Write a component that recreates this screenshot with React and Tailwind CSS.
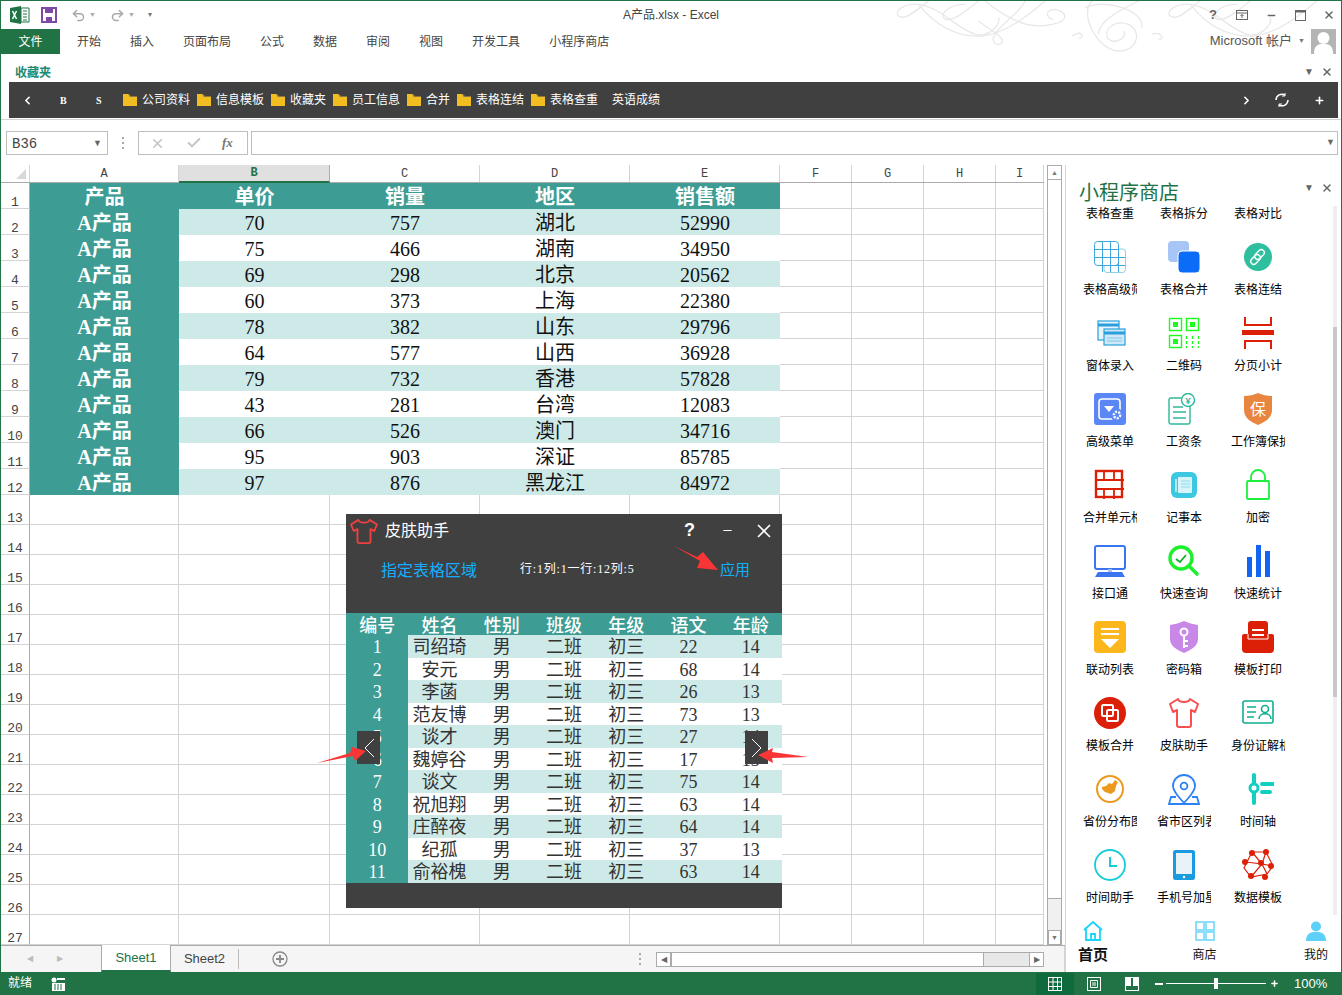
import { Undo2, Redo2, ChevronLeft, ChevronRight, Plus, X, Minus, Check } from 'lucide-react'

const green = '#217346'
const rows = [
  ['产品', '单价', '销量', '地区', '销售额'],
  ['A产品', '70', '757', '湖北', '52990'],
  ['A产品', '75', '466', '湖南', '34950'],
  ['A产品', '69', '298', '北京', '20562'],
  ['A产品', '60', '373', '上海', '22380'],
  ['A产品', '78', '382', '山东', '29796'],
  ['A产品', '64', '577', '山西', '36928'],
  ['A产品', '79', '732', '香港', '57828'],
  ['A产品', '43', '281', '台湾', '12083'],
  ['A产品', '66', '526', '澳门', '34716'],
  ['A产品', '95', '903', '深证', '85785'],
  ['A产品', '97', '876', '黑龙江', '84972'],
]
const students = [
  ['1', '司绍琦', '22', '14'],
  ['2', '安元', '68', '14'],
  ['3', '李菡', '26', '13'],
  ['4', '范友博', '73', '13'],
  ['5', '谈才', '27', '14'],
  ['6', '魏婷谷', '17', '13'],
  ['7', '谈文', '75', '14'],
  ['8', '祝旭翔', '63', '14'],
  ['9', '庄醉夜', '64', '14'],
  ['10', '纪孤', '37', '13'],
  ['11', '俞裕槐', '63', '14'],
]
const tabs = ['开始', '插入', '页面布局', '公式', '数据', '审阅', '视图', '开发工具', '小程序商店']
const favs = ['公司资料', '信息模板', '收藏夹', '员工信息', '合并', '表格连结', '表格查重']
const emptyRows = Array.from({ length: 15 }, (_, i) => i + 13)

function Svg({ children }) {
  return <svg viewBox="0 0 32 32" className="w-8 h-8">{children}</svg>
}

function Dots() {
  return (
    <div className="flex flex-col gap-[3px]">
      <span className="w-[2px] h-[2px] bg-[#aaa]" />
      <span className="w-[2px] h-[2px] bg-[#aaa]" />
      <span className="w-[2px] h-[2px] bg-[#aaa]" />
    </div>
  )
}

const red = '#dc2008'
const tools = [
  ['表格高级筛', <Svg><g fill="none" stroke="#3ea6de" strokeWidth="1"><rect x="10" y="8" width="21.5" height="23.5" rx="3" stroke="#8fcdea" /><rect x="0.5" y="0.5" width="24" height="24" rx="3" fill="#fff" /><path d="M8.5 1v30M16.5 1v30M24.5 8v23M1 8.5h24M1 16.5h30M10 24.5h21" /></g></Svg>],
  ['表格合并', <Svg><rect x="0" y="0" width="21" height="21" rx="4" fill="#a7c5f7" /><rect x="10" y="10" width="22" height="22" rx="4" fill="#0a6cf7" stroke="#fff" strokeWidth="1" /></Svg>],
  ['表格连结', <Svg><circle cx="16" cy="16" r="14" fill="#2fbf9f" /><g fill="none" stroke="#fff" strokeWidth="1.4"><rect x="14.5" y="8" width="6" height="11" rx="3" transform="rotate(45 17.5 13.5)" /><rect x="10.5" y="13" width="6" height="11" rx="3" transform="rotate(45 13.5 18.5)" /></g></Svg>],
  ['窗体录入', <Svg><g stroke="#2a9fdd" strokeWidth="1.2"><rect x="4" y="4" width="21" height="19" fill="#e6f4fb" /><path d="M4 8h21" strokeWidth="3" /><rect x="10" y="12" width="21" height="16" fill="#cfe8f6" /><path d="M10 16h21" strokeWidth="3" /><path d="M13 21h15M13 24h15" stroke="#7fc6ea" /></g></Svg>],
  ['二维码', <Svg><g fill="none" stroke="#1afc1a" strokeWidth="1.4"><rect x="1.5" y="1.5" width="12" height="12" /><rect x="18.5" y="1.5" width="12" height="12" /><rect x="1.5" y="18.5" width="12" height="12" /><path d="M18.5 19v12M24.5 19v12M30.5 19v12" strokeDasharray="3 2" /></g><g fill="#1afc1a"><rect x="5" y="5" width="5" height="5" /><rect x="22" y="5" width="5" height="5" /><rect x="5" y="22" width="5" height="5" /></g></Svg>],
  ['分页小计', <Svg><rect x="0" y="13" width="32" height="5" fill={red} /><path d="M2 0v8h26V0M2 32v-8h26v8" transform="translate(1 0)" fill="none" stroke={red} strokeWidth="2" /></Svg>],
  ['高级菜单', <Svg><rect width="32" height="32" rx="3" fill="#5b86f5" /><rect x="5" y="6" width="21" height="20" rx="3" fill="none" stroke="#fff" strokeWidth="1.6" /><path d="M10 13h10l-5 6z" fill="#fff" /><circle cx="23" cy="22" r="6.5" fill="#5b86f5" /><circle cx="23" cy="22" r="3.2" fill="none" stroke="#fff" strokeWidth="2.4" strokeDasharray="2 1.2" /></Svg>],
  ['工资条', <Svg><rect x="1" y="5" width="21" height="26" rx="2" fill="#fff" stroke="#2fb89a" strokeWidth="1.4" /><path d="M5 14h10M5 19h13M5 25h13" stroke="#2fb89a" strokeWidth="1.4" /><circle cx="20" cy="7" r="6.5" fill="#fff" stroke="#2fb89a" strokeWidth="1.4" /><text x="20" y="10.5" textAnchor="middle" fontSize="9" fontWeight="700" fill="#2fb89a">¥</text></Svg>],
  ['工作簿保护', <Svg><path d="M16 0c4 2 9 3 14 3v14c0 8-7 12-14 15C9 29 2 25 2 17V3c5 0 10-1 14-3z" fill="#e8853f" /><text x="16" y="22" textAnchor="middle" fontSize="16" fill="#fff">保</text></Svg>],
  ['合并单元格', <Svg><rect x="1" y="1" width="26" height="26" transform="translate(1 1)" fill="none" stroke={red} strokeWidth="2.4" /><path d="M2 11h28M2 20h28M10 2v9M20 2v9M10 20v10M20 20v10" stroke={red} strokeWidth="1.8" /></Svg>],
  ['记事本', <Svg><rect x="3" y="3" width="26" height="26" rx="6" fill="#3cc8e0" /><rect x="10" y="8" width="14" height="16" rx="1" fill="#d6f4f9" /><path d="M8 10v13" stroke="#d6f4f9" strokeWidth="1.5" /><path d="M13 12h9M13 15h9M13 18h9" stroke="#8fdcec" /></Svg>],
  ['加密', <Svg><rect x="5" y="12" width="22" height="18" rx="1" fill="#fff" stroke="#1cf03c" strokeWidth="1.8" /><path d="M9 12V8a7 7 0 0 1 14 0v4" fill="none" stroke="#1cf03c" strokeWidth="1.8" /></Svg>],
  ['接口通', <Svg><rect x="1" y="1" width="30" height="23" rx="2" fill="#fff" stroke="#3a74ee" strokeWidth="2" /><rect x="14" y="24" width="4" height="3" fill="#a8c3f7" /><path d="M4 27h24l3 5H1z" fill="#3a74ee" /></Svg>],
  ['快速查询', <Svg><circle cx="13" cy="13" r="11" fill="none" stroke="#1cf02c" strokeWidth="3.4" /><path d="M21 21l8 8" stroke="#1cf02c" strokeWidth="3.6" strokeLinecap="round" /><path d="M8 14l4 3 6-7" fill="none" stroke="#12b028" strokeWidth="1.8" /></Svg>],
  ['快速统计', <Svg><path d="M5 12h5v20H5zM14 0h5v32h-5zM23 6h5v26h-5z" fill="#1464f4" /></Svg>],
  ['联动列表', <Svg><rect width="32" height="32" rx="4" fill="#fbb71c" /><path d="M7 7h18v2H7zM7 12h18v2H7zM7 18h18l-9 9z" fill="#fff" /></Svg>],
  ['密码箱', <Svg><path d="M16 0c4 2 9 3 14 4v14c0 7-7 11-14 14C9 29 2 25 2 18V4c5-1 10-2 14-4z" fill="#c987e8" /><circle cx="16" cy="11" r="3.5" fill="none" stroke="#fff" strokeWidth="2" /><path d="M16 15v12M16 20h4M16 25h4" stroke="#fff" strokeWidth="2" /></Svg>],
  ['模板打印', <Svg><path d="M2 13h4v-10a3 3 0 0 1 3-3h14a3 3 0 0 1 3 3v10h4a2 2 0 0 1 2 2v13a4 4 0 0 1-4 4H4a4 4 0 0 1-4-4V15a2 2 0 0 1 2-2z" fill={red} /><path d="M6 13v5h20v-5" fill="none" stroke="#fff" strokeWidth="1" /><path d="M10 8h12v2H10zM10 13h12v2H10z" fill="#fff" /></Svg>],
  ['模板合并', <Svg><circle cx="16" cy="16" r="16" fill={red} /><g fill="none" stroke="#fff" strokeWidth="2"><rect x="8" y="8" width="11" height="11" rx="1.5" /><rect x="13" y="13" width="11" height="11" rx="1.5" /></g></Svg>],
  ['皮肤助手', <Svg><path d="M10 2l-8 5 3 8 4-2v15a2 2 0 0 0 2 2h10a2 2 0 0 0 2-2V13l4 2 3-8-8-5c-1 4-11 4-12 0z" fill="none" stroke="#f94f4f" strokeWidth="2" strokeLinejoin="round" /></Svg>],
  ['身份证解析', <Svg><rect x="1" y="4" width="30" height="22" rx="2" fill="none" stroke="#0fae8f" strokeWidth="1.6" /><path d="M5 10h9M5 15h9M5 20h7" stroke="#0fae8f" strokeWidth="1.6" /><circle cx="23" cy="12" r="3.5" fill="none" stroke="#0fae8f" strokeWidth="1.6" /><path d="M17 22c0-7 12-7 12 0" fill="none" stroke="#0fae8f" strokeWidth="1.6" /></Svg>],
  ['省份分布图', <Svg><circle cx="16" cy="16" r="13" fill="none" stroke="#eb9a1f" strokeWidth="2" /><path d="M8 14l4-1 3-3 3 1 3-4 3 2-2 4-1 5-4 3-3-1-3-1-3-3z" fill="#eb9a1f" /></Svg>],
  ['省市区列表', <Svg><path d="M16 2a11 11 0 0 1 11 11c0 6-6 11-11 17C11 24 5 19 5 13A11 11 0 0 1 16 2z" fill="#fff" stroke="#2d82f5" strokeWidth="1.8" /><circle cx="16" cy="13" r="3.4" fill="none" stroke="#2d82f5" strokeWidth="1.8" /><path d="M8 24H3l-2 7h30l-2-7h-5" fill="none" stroke="#2d82f5" strokeWidth="1.8" /></Svg>],
  ['时间轴', <Svg><path d="M12 2v28" stroke="#12cfc0" strokeWidth="4" strokeLinecap="round" /><circle cx="12" cy="15" r="4" fill="#fff" stroke="#12cfc0" strokeWidth="3" /><path d="M20 11h11M20 19h8" stroke="#12cfc0" strokeWidth="4" strokeLinecap="round" /></Svg>],
  ['时间助手', <Svg><circle cx="16" cy="16" r="15" fill="none" stroke="#14cdd8" strokeWidth="1.8" /><path d="M16 8v9h7" fill="none" stroke="#14cdd8" strokeWidth="2" /></Svg>],
  ['手机号加星', <Svg><rect x="5" y="1" width="22" height="30" rx="2.5" fill="#1a9be0" /><rect x="8" y="4" width="16" height="21" fill="#e8f2f9" /><circle cx="16" cy="28" r="1.2" fill="#fff" /></Svg>],
  ['数据模板', <Svg><g fill="none" stroke={red} strokeWidth="1.2"><path d="M10 3l14 0 7 14-6 8-16 3-7-9zM4 13l16 2 11 2M10 3l10 12-11 13M24 3l-4 12 5 10" /></g><g fill={red}><circle cx="10" cy="4" r="3" /><circle cx="24" cy="3" r="3" /><circle cx="3" cy="13" r="3" /><circle cx="19" cy="14" r="3" /><circle cx="29" cy="17" r="3" /><circle cx="9" cy="27" r="3" /><circle cx="23" cy="28" r="3" /></g></Svg>],
]
const toolRows = []
for (let i = 0; i < tools.length; i += 3) toolRows.push(tools.slice(i, i + 3))

function Swirl() {
  const first = (
    <>
      <path d="M130 0C90 30 60 60 40 45C25 30 60 5 100 10C170 20 210 80 270 100C310 110 350 70 340 50" />
      <path d="M240 10C190 10 160 40 180 55C210 60 240 30 280 0" />
      <path d="M100 10C140 60 200 110 290 105C370 95 430 40 480 0" />
    </>
  )
  return (
    <svg viewBox="0 0 1340 180" className="absolute left-[884px] top-0 w-[447px] h-[60px]" fill="none" stroke="#e8e8e8" strokeWidth="4">
      {first}
      <path d="M280 60C320 90 360 110 350 125C335 140 315 120 330 100C345 70 400 40 420 0" />
      <path d="M300 0C350 40 420 90 500 70C560 60 540 30 510 25C480 25 480 50 505 55" />
      <path d="M560 105C590 85 600 110 580 112" />
      <path d="M620 0C580 40 640 150 700 150C760 150 770 90 730 70C690 55 650 85 670 115C690 130 730 110 715 90" />
      <path d="M760 0C700 30 640 60 640 100" />
      <path d="M600 20C660 -10 780 30 770 80" />
      <path d="M800 100C830 90 840 115 820 115" />
      <g transform="translate(815 0)">{first}</g>
    </svg>
  )
}

function TitleBar() {
  return (
    <div className="relative h-[28px] flex items-center text-[12px] text-[#444]">
      <Swirl />
      <div className="relative flex items-center ml-[9px] w-full">
        <svg viewBox="0 0 20 18" className="w-[20px] h-[18px]">
          <path d="M0 2l11-2v18L0 16z" fill="#217346" />
          <path d="M11 2h8v14h-8z" fill="#fff" stroke="#217346" />
          <path d="M13 5h4M13 8h4M13 11h4M13 14h4" stroke="#217346" />
          <path d="M2.5 5l4 8M6.5 5l-4 8" stroke="#fff" strokeWidth="1.5" />
        </svg>
        <svg viewBox="0 0 16 16" className="w-[16px] h-[16px] ml-[11px]">
          <path d="M1 1h14v14H1z" fill="none" stroke="#7c4aa5" strokeWidth="2" />
          <path d="M4 1h8v5H4zM5 10h6v5H5z" fill="#7c4aa5" />
        </svg>
        <Undo2 className="w-[15px] h-[15px] ml-[14px] text-[#aaa]" strokeWidth={2.4} />
        <span className="text-[7px] text-[#aaa] ml-[3px]">▼</span>
        <Redo2 className="w-[15px] h-[15px] ml-[14px] text-[#aaa]" strokeWidth={2.4} />
        <span className="text-[7px] text-[#aaa] ml-[3px]">▼</span>
        <span className="text-[8px] text-[#777] ml-[13px] leading-none">▾</span>
        <span className="absolute left-[613px] text-[#444]">A产品.xlsx - Excel</span>
        <div className="absolute left-[1197px] flex items-center text-[#666]">
          <span className="w-[12px] text-center text-[13px] font-bold">?</span>
          <svg viewBox="0 0 12 12" className="w-[12px] h-[12px] ml-[17px]" fill="none" stroke="#666"><rect x="0.5" y="1.5" width="11" height="9" /><path d="M1 4h10M6 9V5.500M4.500 7L6 5.500 7.500 7" /></svg>
          <Minus className="w-[11px] h-[11px] ml-[18px]" strokeWidth={3} />
          <svg viewBox="0 0 11 11" className="w-[11px] h-[11px] ml-[18px]" fill="none" stroke="#666"><rect x="0.5" y="0.5" width="10" height="10" /><path d="M0 1.500h11" strokeWidth="2" /></svg>
          <X className="w-[12px] h-[12px] ml-[17px]" strokeWidth={3} />
        </div>
      </div>
    </div>
  )
}

function RibbonTabs() {
  return (
    <div className="relative h-[25px] flex items-center text-[12px] text-[#444]">
      <div className="w-[59px] h-full flex items-center justify-center text-white" style={{ background: green }}>文件</div>
      <div className="flex gap-[29px] ml-[17px]">
        {tabs.map(t => <span key={t}>{t}</span>)}
      </div>
      <div className="ml-auto flex items-center mr-[5px]">
        <span className="text-[#555] text-[13px] leading-[16px] mb-[2px] mr-[6px]">Microsoft 帐户</span>
        <span className="text-[7px] text-[#777] mr-[6px]">▼</span>
        <svg viewBox="0 0 25 25" className="w-[25px] h-[25px]">
          <rect width="25" height="25" fill="#b4b4b4" />
          <circle cx="12.500" cy="9" r="6" fill="#fff" />
          <path d="M3 25c0-9 4-10 9.500-10S22 16 22 25z" fill="#fff" />
        </svg>
      </div>
    </div>
  )
}

function Folder() {
  return (
    <svg viewBox="0 0 14 14" className="w-[14px] h-[14px] mr-[5px]">
      <path d="M0 1h6l2 2h6v3H0z" fill="#8a7a4a" />
      <path d="M0 4h14v9H0z" fill="#f2bd21" />
      <path d="M0 1h5l3 5H0z" fill="#f2bd21" />
    </svg>
  )
}

function Favorites() {
  return (
    <div className="h-[66px] border-b border-[#d4d4d4] px-[8px]">
      <div className="h-[28px] flex items-end pl-[6px] text-[12px] font-bold leading-[18px] text-[#1a8a70] relative">
        收藏夹
        <span className="absolute left-[1295px] top-[13px] text-[10px] leading-[10px] text-[#666]">▼</span>
        <X className="absolute left-[1312px] top-[12px] w-[12px] h-[12px] text-[#666]" strokeWidth={3} />
      </div>
      <div className="h-[36px] w-[1329px] bg-[#404040] flex items-center text-[12px] text-white">
        <ChevronLeft className="w-[13px] h-[13px] ml-[12px]" strokeWidth={3} />
        <span className="ml-[26px] w-[10px] font-['Liberation_Serif',serif] text-[10px] font-bold">B</span>
        <span className="ml-[26px] w-[10px] font-['Liberation_Serif',serif] text-[10px] font-bold">S</span>
        <div className="flex ml-[17px] gap-[7px]">
          {favs.map(f => (
            <div key={f} className="flex items-center"><Folder />{f}</div>
          ))}
          <span className="ml-[7px]">英语成绩</span>
        </div>
        <div className="ml-auto flex items-center">
          <ChevronRight className="w-[13px] h-[13px]" strokeWidth={3} />
          <svg viewBox="0 0 16 16" className="w-[16px] h-[16px] ml-[21px]" fill="none" stroke="#fff" strokeWidth="1.500">
            <path d="M2 8a6 6 0 0 1 9-5M14 8a6 6 0 0 1-9 5" />
            <path d="M11 1v3H8M5 15v-3h3" strokeWidth="1" />
          </svg>
          <Plus className="w-[11px] h-[11px] ml-[24px] mr-[13px]" strokeWidth={3.5} />
        </div>
      </div>
    </div>
  )
}

function FormulaBar() {
  return (
    <div className="h-[45px] flex items-start pt-[11px] pl-[5px] pr-[3px]">
      <div className="w-[102px] h-[24px] border border-[#bdbdbd] flex items-center justify-between pl-[5px] pr-[5px] pt-[2px] font-['Liberation_Mono',monospace] text-[14px] text-[#444]">
        B36
        <span className="text-[9px] text-[#666] font-['Liberation_Sans',sans-serif]">▼</span>
      </div>
      <div className="w-[30px] h-[24px] flex items-center justify-center"><Dots /></div>
      <div className="w-[110px] h-[24px] border border-[#bdbdbd] flex items-center text-[#c4c4c4]">
        <X className="w-[15px] h-[15px] ml-[11px]" strokeWidth={2.500} />
        <Check className="w-[16px] h-[16px] ml-[21px]" strokeWidth={3} />
        <span className="ml-[20px] font-['Liberation_Serif',serif] italic font-bold text-[13px] text-[#777]">fx</span>
      </div>
      <div className="flex-1 ml-[3px] h-[24px] border border-[#bdbdbd] flex items-center justify-end pr-[2px]">
        <span className="text-[9px] text-[#666]">▼</span>
      </div>
    </div>
  )
}

function ColHeader() {
  const cols = [['A', 149], ['B', 151], ['C', 150], ['D', 150], ['E', 150], ['F', 72], ['G', 72], ['H', 72], ['I', 48]]
  return (
    <div className="h-[18px] flex border-b border-[#ababab] font-['Liberation_Mono',monospace] text-[12px] text-[#444]">
      <div className="w-[29px] border-r border-[#d4d4d4] flex items-end justify-end pr-[3px] pb-[3px]">
        <svg viewBox="0 0 10 10" className="w-[10px] h-[10px]"><path d="M10 0v10H0z" fill="#d8d8d8" /></svg>
      </div>
      {cols.map(([c, w]) => (
        c === 'B'
          ? <div key={c} className="w-[151px] h-[18px] bg-[#e0e0e0] border-b-2 border-[#217346] border-r border-r-[#ababab] flex items-end justify-center text-[#217346] font-bold leading-[15px]">{c}</div>
          : <div key={c} style={{ width: w }} className="border-r border-[#d4d4d4] flex items-end justify-center leading-[15px]">{c}</div>
      ))}
    </div>
  )
}

function RowHead({ n, h }) {
  return (
    <div style={{ height: h }} className="w-[29px] border-r border-[#ababab] border-b border-b-[#d4d4d4] flex items-end justify-center font-['Liberation_Mono',monospace] text-[13px] leading-[11px] text-[#444] shrink-0">
      {n}
    </div>
  )
}

function BlankCols() {
  return (
    <>
      <div className="w-[72px] border-r border-b border-[#d4d4d4]" />
      <div className="w-[72px] border-r border-b border-[#d4d4d4]" />
      <div className="w-[72px] border-r border-b border-[#d4d4d4]" />
      <div className="w-[48px] border-r border-b border-[#d4d4d4]" />
    </>
  )
}

function DataRows() {
  return rows.map((r, i) => {
    const bg = i === 0 ? 'bg-[#3d9c93] text-white font-bold' : i % 2 === 1 ? 'bg-[#cdeae8] text-[#111]' : 'bg-white text-[#111]'
    return (
      <div key={i} className="h-[26px] flex">
        <RowHead n={i + 1} h={26} />
        {r.map((v, j) => (
          <div key={j} className={`${j === 0 ? 'w-[149px] bg-[#3d9c93] text-white font-bold' : j === 1 ? `w-[151px] ${bg}` : `w-[150px] ${bg}`} flex items-center justify-center pt-[2px] leading-none`}>
            {v}
          </div>
        ))}
        <BlankCols />
      </div>
    )
  })
}

function EmptyRows() {
  return emptyRows.map(n => (
    <div key={n} className="h-[30px] flex">
      <RowHead n={n} h={30} />
      <div className="w-[149px] border-r border-b border-[#d4d4d4]" />
      <div className="w-[151px] border-r border-b border-[#d4d4d4]" />
      <div className="w-[150px] border-r border-b border-[#d4d4d4]" />
      <div className="w-[150px] border-r border-b border-[#d4d4d4]" />
      <div className="w-[150px] border-r border-b border-[#d4d4d4]" />
      <BlankCols />
    </div>
  ))
}

function SkinDialog() {
  const head = ['编号', '姓名', '性别', '班级', '年级', '语文', '年龄']
  return (
    <div className="absolute left-[345px] top-[349px] w-[436px] h-[394px] bg-[#404040] flex flex-col font-['Liberation_Serif','Noto_Sans_CJK_SC',serif]">
      <div className="h-[33px] flex items-center text-white shrink-0">
        <svg viewBox="0 0 32 28" className="w-[30px] h-[26px] ml-[3px]">
          <path d="M10 2L2 7l3 7 4-2v13a2 2 0 0 0 2 2h10a2 2 0 0 0 2-2V12l4 2 3-7-8-5c-1 4-11 4-12 0z" fill="none" stroke="#f04040" strokeWidth="2" strokeLinejoin="round" />
        </svg>
        <span className="ml-[6px] text-[16px] leading-[20px] mb-[4px] font-['Noto_Sans_CJK_SC',sans-serif]">皮肤助手</span>
        <span className="ml-auto text-[18px] font-bold font-['Liberation_Sans',sans-serif]">?</span>
        <Minus className="w-[13px] h-[13px] ml-[26px]" strokeWidth={2} />
        <X className="w-[22px] h-[22px] ml-[19px] mr-[7px]" strokeWidth={1.800} />
      </div>
      <div className="h-[66px] shrink-0 flex items-start pt-[12px] text-[#10b0ff]">
        <span className="ml-[35px] text-[16px] leading-[20px] font-['Noto_Sans_CJK_SC',sans-serif]">指定表格区域</span>
        <span className="ml-[43px] text-[12px] leading-[20px] tracking-[0.8px] text-white">行:1列:1一行:12列:5</span>
        <span className="ml-auto mr-[32px] text-[15px] leading-[20px] font-['Noto_Sans_CJK_SC',sans-serif]">应用</span>
      </div>
      <div className="grid grid-cols-7 h-[22px] shrink-0 bg-[#3d9c93] text-white text-[18px] font-medium pt-[3px] leading-none items-center text-center">
        {head.map(h => <span key={h}>{h}</span>)}
      </div>
      {students.map((s, i) => (
        <div key={s[0]} className={`grid grid-cols-7 h-[22.500px] shrink-0 text-[18px] leading-none items-center text-center text-[#333] ${i % 2 === 0 ? 'bg-[#cdeae8]' : 'bg-white'}`}>
          <span className="bg-[#3d9c93] text-white h-full pt-[2px] flex items-center justify-center">{s[0]}</span>
          <span className="pt-[2px]">{s[1]}</span>
          <span className="pt-[2px]">男</span>
          <span className="pt-[2px]">二班</span>
          <span className="pt-[2px]">初三</span>
          <span className="pt-[2px]">{s[2]}</span>
          <span className="pt-[2px]">{s[3]}</span>
        </div>
      ))}
      <div className="absolute left-[11px] top-[217px] w-[23px] h-[33px] bg-[#404040] flex items-center justify-center">
        <svg viewBox="0 0 12 20" className="w-[12px] h-[20px]" fill="none" stroke="#fff"><path d="M11 1L2 10l9 9" /></svg>
      </div>
      <div className="absolute left-[399px] top-[217px] w-[23px] h-[33px] bg-[#404040] flex items-center justify-center">
        <svg viewBox="0 0 12 20" className="w-[12px] h-[20px]" fill="none" stroke="#fff"><path d="M1 1l9 9-9 9" /></svg>
      </div>
      {/* red callout arrows, page coordinates */}
      <svg viewBox="300 514 520 394" className="absolute left-[-46px] top-0 w-[520px] h-[394px] pointer-events-none" fill="#f93535">
        <path d="M674 546l23 11 6-5 15 18-21-2 3-7z" />
        <path d="M317 763l33-10 2-6 14 4-11 10-2-5z" />
        <path d="M758 755l15-7-1 4 36 5-36 1 1 5z" />
      </svg>
    </div>
  )
}

function VScroll() {
  return (
    <div className="w-[21px] flex flex-col">
      <div className="w-[15px] ml-[3px] border-x border-[#ababab] flex-1 flex flex-col bg-[#f0f0f0]">
        <div className="h-[15px] border-y border-[#ababab] bg-white flex items-center justify-center text-[7px] text-[#777] leading-none">▲</div>
        <div className="h-[719px] border-b border-[#ababab] bg-white" />
        <div className="flex-1" />
        <div className="h-[15px] border border-[#ababab] bg-white flex items-center justify-center text-[7px] text-[#777] leading-none">▼</div>
      </div>
    </div>
  )
}

function SheetBar() {
  return (
    <div className="h-[27px] flex bg-[#f5f5f5] border-t border-[#ababab] text-[13px] font-['Liberation_Sans',sans-serif]">
      <div className="w-[100px] flex items-center pl-[26px] gap-[24px] text-[8px] text-[#bbb]">
        <span>◀</span><span>▶</span>
      </div>
      <div className="w-[70px] h-[27px] -mt-[1px] bg-white border-x border-[#ababab] border-b-2 border-b-[#217346] text-[#217346] flex items-center justify-center">Sheet1</div>
      <div className="w-[68px] flex items-center justify-center text-[#444] border-r border-[#bdbdbd] my-[3px]">Sheet2</div>
      <svg viewBox="0 0 16 16" className="w-[16px] h-[16px] ml-[33px] mt-[5px]" fill="none" stroke="#888" strokeWidth="1.300">
        <circle cx="8" cy="8" r="7" /><path d="M4 8h8M8 4v8" strokeWidth="1.800" />
      </svg>
      <div className="ml-[350px] w-[4px] flex items-center justify-center"><Dots /></div>
      <div className="ml-[14px] mt-[6px] h-[15px] w-[388px] flex border border-[#ababab] bg-[#e8e8e8] text-[8px] text-[#666] leading-none">
        <div className="w-[15px] bg-white border-r-2 border-[#ababab] flex items-center justify-center">◀</div>
        <div className="w-[312px] bg-white border-r border-[#ababab]" />
        <div className="flex-1" />
        <div className="w-[14px] bg-white border-l border-[#ababab] flex items-center justify-center">▶</div>
      </div>
      <div className="ml-auto w-px bg-[#d4d4d4]" />
    </div>
  )
}

function ToolCell({ label, icon }) {
  return (
    <div className="w-[74px] h-[76px] flex flex-col items-center">
      {icon}
      <div className="w-[54px] mt-[9px] h-[16px] overflow-hidden whitespace-nowrap text-center text-[12px] leading-[16px] text-black">{label}</div>
    </div>
  )
}

function StorePanel() {
  return (
    <div className="w-[276px] border-l border-[#d4d4d4] flex flex-col relative">
      <div className="h-[41px] relative pl-[13px] pt-[15px] text-[20px] leading-[27px] text-[#217346]">
        小程序商店
        <span className="absolute left-[238px] top-[18px] text-[10px] text-[#666] leading-none">▼</span>
        <X className="absolute left-[255px] top-[17px] w-[12px] h-[12px] text-[#666]" strokeWidth={3} />
      </div>
      <div className="h-[709px] flex">
        <div className="w-[267px] overflow-hidden pl-[7px]">
          <div className="flex h-[35px] pt-[1px] text-[12px] leading-[14px] text-black">
            <span className="w-[74px] text-center">表格查重</span>
            <span className="w-[74px] text-center">表格拆分</span>
            <span className="w-[74px] text-center">表格对比</span>
          </div>
          {toolRows.map((tr, i) => (
            <div key={i} className="flex">
              {tr.map(([label, icon]) => <ToolCell key={label} label={label} icon={icon} />)}
            </div>
          ))}
        </div>
        <div className="w-[4px] bg-[#eeeeee] flex flex-col">
          <div className="h-[121px]" />
          <div className="h-[370px] bg-[#c8c8c8]" />
        </div>
      </div>
      <div className="flex-1 flex justify-between pl-[7px] pr-[5px] pt-[6px]">
        <div className="w-[40px] flex flex-col items-center">
          <svg viewBox="0 0 20 20" className="w-[20px] h-[20px]" fill="none" stroke="#18d4f8" strokeWidth="1.800">
            <path d="M1 9l9-8 9 8M3 8v11h14V8" /><path d="M8 19v-6h4v6" />
          </svg>
          <span className="text-[15px] font-bold leading-[18px] mt-[5px] text-[#111]">首页</span>
        </div>
        <div className="w-[40px] flex flex-col items-center">
          <svg viewBox="0 0 20 20" className="w-[20px] h-[20px]" fill="none" stroke="#7fdcfb" strokeWidth="1.800">
            <rect x="1" y="1" width="8" height="8" /><rect x="11" y="1" width="8" height="8" /><rect x="1" y="11" width="8" height="8" /><rect x="11" y="11" width="8" height="8" />
          </svg>
          <span className="text-[12px] leading-[18px] mt-[5px] text-[#111]">商店</span>
        </div>
        <div className="w-[40px] flex flex-col items-center">
          <svg viewBox="0 0 20 20" className="w-[20px] h-[20px]" fill="#5dd0fa">
            <circle cx="10" cy="5.500" r="5" /><path d="M0 20c0-8 5-9 10-9s10 1 10 9z" />
          </svg>
          <span className="text-[12px] leading-[18px] mt-[5px] text-[#111]">我的</span>
        </div>
      </div>
    </div>
  )
}

function StatusBar() {
  return (
    <div className="h-[23px] flex items-center text-white text-[12px]" style={{ background: green }}>
      <span className="ml-[7px] leading-[16px] mb-[2px]">就绪</span>
      <svg viewBox="0 0 14 14" className="w-[14px] h-[14px] ml-[19px]" fill="#fff">
        <circle cx="3" cy="3" r="2.500" /><path d="M6 1h8v2H6zM1 6h13v8H1z" />
        <path d="M3 8h9M3 10h9M3 12h9" stroke="#217346" strokeDasharray="2 1" />
      </svg>
      <div className="ml-[971px] w-[38px] h-[22px] bg-[#0f6b3c] flex items-center justify-center">
        <svg viewBox="0 0 14 14" className="w-[14px] h-[14px]" fill="none" stroke="#fff"><rect x="0.500" y="0.500" width="13" height="13" /><path d="M5 0v14M9.500 0v14M0 5h14M0 9.500h14" /></svg>
      </div>
      <svg viewBox="0 0 14 14" className="w-[14px] h-[14px] ml-[13px]" fill="none" stroke="#fff"><rect x="0.500" y="0.500" width="13" height="13" /><path d="M3.500 3.500h7v7h-7zM5 6h4M5 8h4" /></svg>
      <svg viewBox="0 0 14 14" className="w-[14px] h-[14px] ml-[24px]" fill="#fff"><path d="M0 0h6v9H0zM8 0h6v9H8z" /><rect x="0.500" y="0.500" width="13" height="13" fill="none" stroke="#fff" /></svg>
      <span className="ml-[16px] w-[8px] h-[2px] bg-white" />
      <div className="ml-[3px] w-[100px] h-[1px] bg-white flex justify-center items-center">
        <span className="w-[4px] h-[11px] bg-white" />
      </div>
      <Plus className="w-[9px] h-[9px] ml-[4px]" strokeWidth={4} />
      <span className="ml-[15px] text-[13px] font-['Liberation_Sans',sans-serif]">100%</span>
    </div>
  )
}

export default function App() {
  return (
    <div className="w-[1342px] h-[995px] overflow-hidden bg-white flex flex-col border-x border-t border-[#217346] font-['Liberation_Sans','Noto_Sans_CJK_SC',sans-serif]">
      <TitleBar />
      <RibbonTabs />
      <Favorites />
      <FormulaBar />
      <div className="flex-1 flex min-h-0">
        <div className="w-[1064px] flex flex-col">
          <div className="h-[780px] flex">
            <div className="w-[1043px] relative font-['Liberation_Serif','Noto_Sans_CJK_SC',serif] text-[20px]">
              <ColHeader />
              <DataRows />
              <EmptyRows />
              <SkinDialog />
            </div>
            <VScroll />
          </div>
          <SheetBar />
        </div>
        <StorePanel />
      </div>
      <StatusBar />
    </div>
  )
}
